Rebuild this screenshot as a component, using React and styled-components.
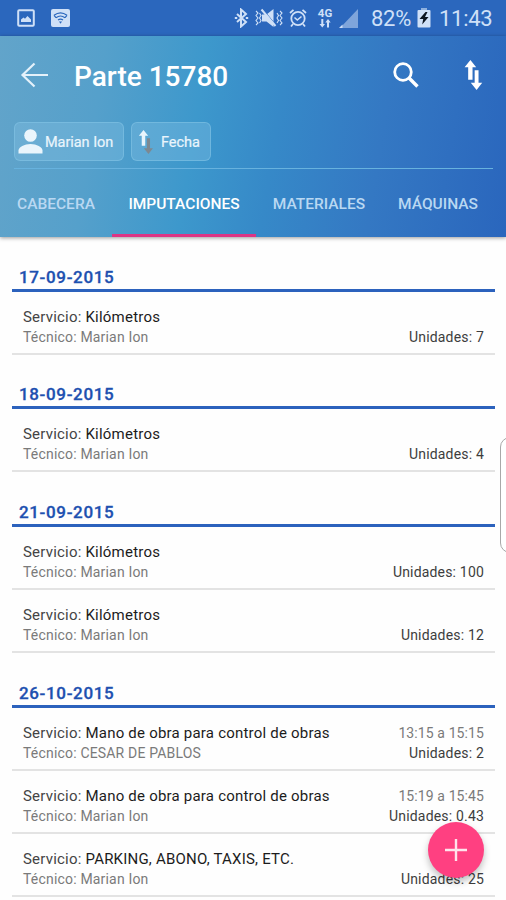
import React from "react";
import styled, { createGlobalStyle } from "styled-components";

const GlobalStyle = createGlobalStyle`
  * {
    box-sizing: border-box;
  }

  body {
    margin: 0;
    background: #fff;
    font-family: Roboto, "Liberation Sans", sans-serif;
  }
`;

const Screen = styled.div`
  position: relative;
  width: 506px;
  height: 900px;
  overflow: hidden;
  background: #fefefe;
`;

const StatusBar = styled.div`
  display: flex;
  align-items: center;
  justify-content: space-between;
  height: 36px;
  padding: 0 13px 0 17px;
  background: #2b67bd;
  color: #cfe0f7;
`;

const StatusGroup = styled.div`
  display: flex;
  align-items: center;
  gap: ${(props) => props.$gap || 0}px;
`;

const StatusText = styled.span`
  width: ${(props) => props.$width}px;
  font-size: 22px;
  line-height: 36px;
  letter-spacing: -0.3px;
  margin-left: ${(props) => props.$left || 0}px;
  padding-top: 2px;
  white-space: nowrap;
`;

const Header = styled.header`
  position: relative;
  display: flex;
  flex-direction: column;
  height: 201px;
  background: linear-gradient(
    99deg,
    #62a4ca 0%,
    #55a0cb 20%,
    #3d98cc 39%,
    #3689c8 54%,
    #3478c3 74%,
    #2a66bd 100%
  );
  box-shadow: 0 1px 4px rgba(0, 0, 0, 0.4);
`;

const Toolbar = styled.div`
  display: flex;
  align-items: center;
  height: 78px;
  padding: 0 23px 0 20px;
`;

const Title = styled.h1`
  flex: 1;
  margin: 3px 0 0 25px;
  font-size: 28px;
  font-weight: 500;
  letter-spacing: 0;
  color: #fff;
`;

const IconButton = styled.button`
  display: flex;
  margin: 0 0 0 ${(props) => props.$left || 0}px;
  padding: 0;
  border: none;
  background: none;
  color: #fff;
`;

const Filters = styled.div`
  display: flex;
  gap: 7px;
  margin: 8px 13px 0 14px;
  height: 47px;
  border-bottom: 1px solid #67b2de;
`;

const Chip = styled.div`
  display: flex;
  align-items: center;
  width: ${(props) => props.$width}px;
  height: 39px;
  padding-left: 3px;
  border: 1px solid rgba(135, 200, 232, 0.5);
  border-radius: 6px;
  background: rgba(135, 196, 228, 0.35);
  color: #eaf5fc;
  font-size: 14.5px;
  letter-spacing: -0.05px;
  white-space: nowrap;
`;

const ChipLabel = styled.span`
  margin-left: ${(props) => props.$left}px;
  padding-top: 1px;
  -webkit-text-stroke: 0.2px;
`;

const Tabs = styled.nav`
  display: flex;
  flex: 1;
`;

const Tab = styled.div`
  display: flex;
  align-items: center;
  justify-content: center;
  width: ${(props) => props.$width}px;
  padding-top: 5px;
  border-bottom: 3px solid ${(props) => (props.$active ? "#dc3585" : "transparent")};
  color: ${(props) => (props.$active ? "#fff" : "#b9d8f2")};
  font-size: 15.5px;
  font-weight: 500;
`;

const List = styled.main`
  padding: 0 11px 0 12px;
`;

const DateHead = styled.h2`
  display: flex;
  align-items: flex-end;
  height: ${(props) => (props.$first ? 54.7 : 54.9)}px;
  margin: 0;
  padding: 0 7px 2px;
  border-bottom: 3px solid #2c62bd;
  color: #1d50b0;
  font-size: 17px;
  line-height: 20px;
  font-weight: 500;
  letter-spacing: 0.65px;
  -webkit-text-stroke: 0.3px;
`;

const Entry = styled.div`
  display: flex;
  justify-content: space-between;
  height: 62.9px;
  padding: 15px 11px 0;
  border-bottom: 2px solid #e3e3e3;
`;

const Column = styled.div`
  display: flex;
  flex-direction: column;
  align-items: ${(props) => (props.$end ? "flex-end" : "flex-start")};
`;

const Service = styled.div`
  height: 20px;
  color: #444;
  font-size: 15px;
  line-height: 21px;
  letter-spacing: 0.21px;

  b {
    color: #1c1c1c;
    font-weight: 400;
  }
`;

const Small = styled.div`
  height: 20px;
  color: ${(props) => (props.$dark ? "#3d3d3d" : "#7a7a7a")};
  font-size: 14px;
  line-height: 20px;
  letter-spacing: 0.18px;
`;

const Time = styled(Small)`
  letter-spacing: 0.1px;
`;

const Fab = styled.button`
  position: absolute;
  left: 428px;
  top: 822px;
  display: flex;
  align-items: center;
  justify-content: center;
  width: 56px;
  height: 56px;
  padding: 0;
  border: none;
  border-radius: 50%;
  background: #ff4081;
  box-shadow: 0 4px 7px rgba(0, 0, 0, 0.25);
`;

// edge panel handle on the right side of the phone
const EdgeHandle = styled.div`
  position: absolute;
  left: 500px;
  top: 437px;
  width: 20px;
  height: 116px;
  border: 1px solid #a8a8a8;
  border-radius: 10px;
  background: #fff;
`;

const PictureIcon = () => (
  <svg width="18" height="18" viewBox="0 0 18 18">
    <rect x="1.2" y="1.2" width="15.6" height="15.6" rx="1" fill="none" stroke="currentColor" strokeWidth="2" />
    <path d="M4 13V10.5L6.5 8.5 8 9.7 10.5 7 14 10.5V13z" fill="currentColor" />
  </svg>
);

const WifiIcon = () => (
  <svg width="19" height="18" viewBox="0 0 19 18">
    <rect width="19" height="18" rx="2" fill="currentColor" />
    <g fill="none" stroke="#2b67bd" strokeWidth="1.2">
      <path d="M3 6.300Q9.500 1.500 16 6.300" />
      <path d="M5 8.700Q9.500 5.300 14 8.700M3 6.300L5 8.700M16 6.300L14 8.700" />
      <path d="M7 10.900Q9.500 9.200 12 10.900" />
    </g>
    <path d="M8 12.500h3L9.500 14.800z" fill="#2b67bd" />
  </svg>
);

const BluetoothIcon = () => (
  <svg width="15" height="20" viewBox="0 0 15 20">
    <path d="M3 6l9 8-5 4.500V1.500L12 6l-9 8" fill="none" stroke="currentColor" strokeWidth="2" />
    <path d="M0.800 10h2.400M11.800 10h2.400" stroke="currentColor" strokeWidth="2" />
  </svg>
);

const VibrateIcon = () => (
  <svg width="28" height="20" viewBox="0 0 28 20">
    <path d="M7 6.500h4.500l7-5.500v18l-7-5.500H7z" fill="currentColor" />
    <path d="M8 1.500l13 15.500" stroke="#2b67bd" strokeWidth="1" />
    <path d="M6.500 1.500l14 16.500" stroke="currentColor" strokeWidth="2" />
    <path
      d="M1 3l2 2-2 2.500 2 2.500-2 2.500 2 2.500-2 2M4.500 5l1.500 2.500L4.500 10 6 12.500 4.500 15M22 5l1.500 2.500L22 10l1.500 2.500L22 15M25 3l2 2-2 2.500 2 2.500-2 2.500 2 2.500-2 2"
      fill="none"
      stroke="currentColor"
      strokeWidth="1.100"
    />
  </svg>
);

const AlarmIcon = () => (
  <svg width="18" height="20" viewBox="0 0 18 20" fill="none" stroke="currentColor" strokeWidth="1.800">
    <circle cx="9" cy="10.500" r="6.700" />
    <path d="M1 5l3.500-3.200M17 5l-3.500-3.200M4 16l-2 2.500M14 16l2 2.500" />
    <path d="M5.500 9.500L8.300 12l4.200-3.500" strokeWidth="1.600" />
  </svg>
);

const NetworkBox = styled.div`
  display: flex;
  flex-direction: column;
  align-items: center;
  width: 16px;
  height: 20px;
  margin: 0 0 0 4px;
  font-size: 11.5px;
  line-height: 11px;
  font-weight: 700;
`;

const NetworkIcon = () => (
  <NetworkBox>
    4G
    <svg width="12" height="9" viewBox="0 0 12 9" fill="currentColor">
      <path d="M2.300 0h2v5H6L3.300 8.500.500 5h1.800zM8 8.500h2V3.500h1.700L9 0 6.300 3.500H8z" />
    </svg>
  </NetworkBox>
);

const SignalIcon = () => (
  <svg width="19" height="19" viewBox="0 0 19 19">
    <path d="M19 0v19H1z" fill="#7fa5db" />
    <path d="M3.500 15.500V19H0z" fill="currentColor" />
  </svg>
);

const BatteryIcon = () => (
  <svg width="14" height="20" viewBox="0 0 14 20">
    <path d="M4 0h6v2.500H4z" fill="#8fb1df" />
    <rect x="0.500" y="2" width="13" height="17.500" rx="1" fill="currentColor" />
    <path d="M8.500 4L2.500 11h3.700l-1 5.500L11.500 9H8l2.500-5z" fill="#0b1420" />
  </svg>
);

const BackIcon = () => (
  <svg width="29" height="26" viewBox="0 0 29 26" fill="none" stroke="#e4f1fa" strokeWidth="2.200">
    <path d="M28 13H2.500M14.500 1.500L2.500 13l12 11.500" />
  </svg>
);

const SearchIcon = () => (
  <svg width="26" height="26" viewBox="0 0 26 26" fill="none" stroke="currentColor" strokeWidth="2.800">
    <circle cx="10" cy="10" r="8.300" />
    <path d="M15.800 15.800l8.700 8.700" strokeWidth="3.400" />
  </svg>
);

const SortIcon = ({ width, height, down = "currentColor" }) => (
  <svg width={width} height={height} viewBox="0 0 19 31">
    <path d="M10.700 10.500h4v13h3.800L12.700 31l-6-7.500h4z" fill={down} />
    <path d="M4 20.500h4.500v-13h3.800L6.300 0 0.300 7.500H4z" fill="currentColor" />
  </svg>
);

const PersonIcon = () => (
  <svg width="25" height="25" viewBox="0 0 25 25" fill="currentColor">
    <circle cx="12.500" cy="6.500" r="6.300" />
    <path d="M0.500 24.500v-3c0-3.500 6-6.500 12-6.500s12 3 12 6.500v3z" />
  </svg>
);

const PlusIcon = () => (
  <svg width="24" height="24" viewBox="0 0 24 24" stroke="#ffe3ec" strokeWidth="2.400">
    <path d="M12 1v22M1 12h22" />
  </svg>
);

const tabs = [
  { name: "CABECERA", width: 112 },
  { name: "IMPUTACIONES", width: 144, active: true },
  { name: "MATERIALES", width: 126 },
  { name: "MÁQUINAS", width: 112 },
];

const days = [
  {
    date: "17-09-2015",
    entries: [{ service: "Kilómetros", tech: "Marian Ion", units: "7" }],
  },
  {
    date: "18-09-2015",
    entries: [{ service: "Kilómetros", tech: "Marian Ion", units: "4" }],
  },
  {
    date: "21-09-2015",
    entries: [
      { service: "Kilómetros", tech: "Marian Ion", units: "100" },
      { service: "Kilómetros", tech: "Marian Ion", units: "12" },
    ],
  },
  {
    date: "26-10-2015",
    entries: [
      {
        service: "Mano de obra para control de obras",
        tech: "CESAR DE PABLOS",
        time: "13:15 a 15:15",
        units: "2",
      },
      {
        service: "Mano de obra para control de obras",
        tech: "Marian Ion",
        time: "15:19 a 15:45",
        units: "0.43",
      },
      { service: "PARKING, ABONO, TAXIS, ETC.", tech: "Marian Ion", units: "25" },
    ],
  },
];

const App = () => {
  return (
    <Screen>
      <GlobalStyle />
      <StatusBar>
        <StatusGroup $gap={16}>
          <PictureIcon />
          <WifiIcon />
        </StatusGroup>
        <StatusGroup $gap={6}>
          <BluetoothIcon />
          <VibrateIcon />
          <AlarmIcon />
          <NetworkIcon />
          <SignalIcon />
          <StatusText $left={7} $width={40}>
            82%
          </StatusText>
          <BatteryIcon />
          <StatusText $left={2} $width={54}>
            11:43
          </StatusText>
        </StatusGroup>
      </StatusBar>

      <Header>
        <Toolbar>
          <IconButton>
            <BackIcon />
          </IconButton>
          <Title>Parte 15780</Title>
          <IconButton>
            <SearchIcon />
          </IconButton>
          <IconButton $left={45}>
            <SortIcon width={19} height={30} />
          </IconButton>
        </Toolbar>
        <Filters>
          <Chip $width={110}>
            <PersonIcon />
            <ChipLabel $left={2}>Marian Ion</ChipLabel>
          </Chip>
          <Chip $width={80}>
            <SortIcon width={22} height={24} down="#7d8891" />
            <ChipLabel $left={4}>Fecha</ChipLabel>
          </Chip>
        </Filters>
        <Tabs>
          {tabs.map((tab) => (
            <Tab key={tab.name} $width={tab.width} $active={tab.active}>
              {tab.name}
            </Tab>
          ))}
        </Tabs>
      </Header>

      <List>
        {days.map((day, i) => (
          <section key={day.date}>
            <DateHead $first={i === 0}>{day.date}</DateHead>
            {day.entries.map((entry, j) => (
              <Entry key={j}>
                <Column>
                  <Service>
                    Servicio: <b>{entry.service}</b>
                  </Service>
                  <Small>Técnico: {entry.tech}</Small>
                </Column>
                <Column $end>
                  <Time>{entry.time}</Time>
                  <Small $dark>Unidades: {entry.units}</Small>
                </Column>
              </Entry>
            ))}
          </section>
        ))}
      </List>

      <EdgeHandle />
      <Fab>
        <PlusIcon />
      </Fab>
    </Screen>
  );
};

export default App;
